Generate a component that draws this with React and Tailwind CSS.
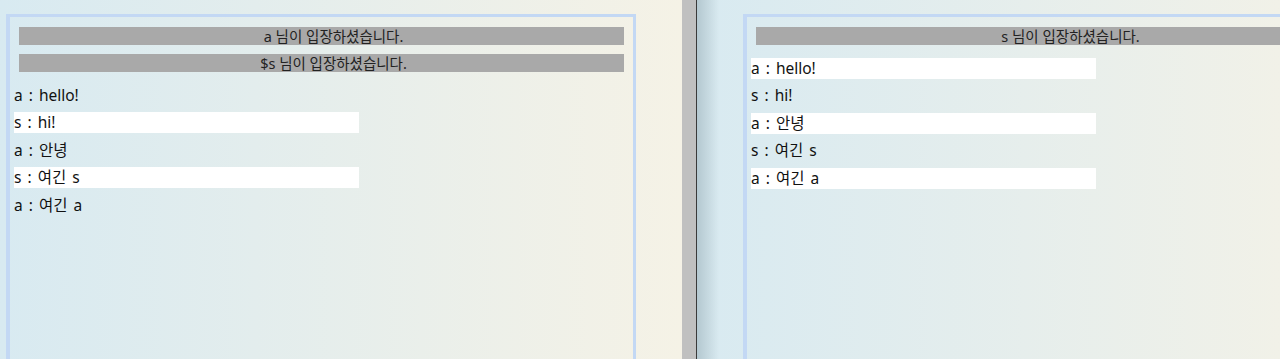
const leftLog = [
  { text: "a : hello!", mine: false },
  { text: "s : hi!", mine: true },
  { text: "a : 안녕", mine: false },
  { text: "s : 여긴 s", mine: true },
  { text: "a : 여긴 a", mine: false },
];

const rightLog = [
  { text: "a : hello!", mine: true },
  { text: "s : hi!", mine: false },
  { text: "a : 안녕", mine: true },
  { text: "s : 여긴 s", mine: false },
  { text: "a : 여긴 a", mine: true },
];

function ChatBox({ notices, log }) {
  return (
    <div className="w-[630px] h-[420px] shrink-0 border-[3px] border-l-4 border-[#c3d8f4] pt-[10px]">
      <div className="flex flex-col gap-[9px] px-[9px]">
        {notices.map((n, i) => (
          <div
            key={i}
            className="h-[18px] bg-[#a9a9a9] pl-6 text-center text-[14.5px] leading-[18px] text-[#222]"
          >
            {n}
          </div>
        ))}
      </div>
      <div className="mt-[12.5px] flex flex-col gap-[6.5px] pl-1">
        {log.map((m, i) => (
          <div
            key={i}
            className={`h-[21px] w-[345px] text-[15.5px] leading-[21px] text-[#111] [word-spacing:2px] ${
              m.mine ? "bg-white" : ""
            }`}
          >
            {m.text}
          </div>
        ))}
      </div>
    </div>
  );
}

export default function App() {
  return (
    <div
      className="flex h-[359px] w-[1280px] overflow-hidden"
      style={{ fontFamily: '"Noto Sans", "Noto Sans CJK KR", sans-serif' }}
    >
      <div className="w-[682px] shrink-0 bg-gradient-to-r from-[#d8eaf1] to-[#f5f2e6] pl-[6px] pt-[14px]">
        <ChatBox
          notices={["a 님이 입장하셨습니다.", "$s 님이 입장하셨습니다."]}
          log={leftLog}
        />
      </div>
      <div className="w-[14px] shrink-0 bg-[#c0c0c0]" />
      <div className="w-px shrink-0 bg-[#3a3a3a]" />
      <div className="relative flex-1 overflow-hidden bg-gradient-to-r from-[#d8eaf1] to-[#f1f1e8] pl-[46px] pt-[14px]">
        <div className="absolute inset-y-0 left-0 w-[22px] bg-gradient-to-r from-[#b4c8d0] to-transparent" />
        <ChatBox notices={["s 님이 입장하셨습니다."]} log={rightLog} />
      </div>
    </div>
  );
}
